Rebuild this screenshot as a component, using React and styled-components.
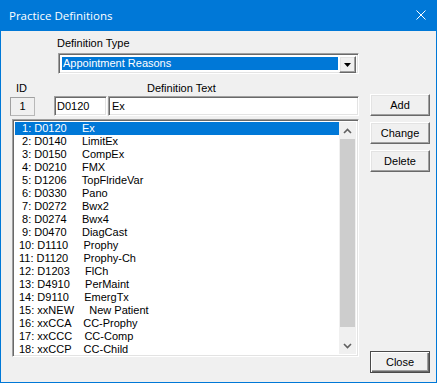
import React from "react";
import styled, { createGlobalStyle, css } from "styled-components";

const GlobalStyle = createGlobalStyle`
  html, body { margin: 0; padding: 0; background: #ffffff; }
  body { font-family: "Liberation Sans", Arial, sans-serif; font-size: 11px; color: #000; }
  * { box-sizing: border-box; }
`;

const sunken = css`
  border-style: solid;
  border-width: 1px;
  border-color: #a0a0a0 #ffffff #ffffff #a0a0a0;
  box-shadow: inset 1px 1px 0 #696969, inset -1px -1px 0 #e3e3e3;
`;

const raised = css`
  border-style: solid;
  border-width: 1px;
  border-color: #ffffff #696969 #696969 #ffffff;
  box-shadow: inset -1px -1px 0 #a0a0a0, inset 1px 1px 0 #e3e3e3;
  background: #f0f0f0;
`;

const Window = styled.div`
  width: 437px;
  height: 383px;
  border: 1px solid #0078d7;
  border-top: none;
  background: #f0f0f0;
  display: flex;
  flex-direction: column;
`;

const TitleBar = styled.div`
  height: 31px;
  flex: none;
  background: #0078d7;
  color: #ffffff;
  display: flex;
  align-items: center;
  justify-content: space-between;
  padding: 0 10px 1px 8px;
  font-family: "Open Sans", "Noto Sans", sans-serif;
  font-size: 11.5px;
`;

const Body = styled.div`
  flex: 1;
  display: flex;
  padding: 0 0 9px 9px;
`;

const LeftColumn = styled.div`
  width: 350px;
  display: flex;
  flex-direction: column;
`;

const RightColumn = styled.div`
  width: 60px;
  margin-left: 10px;
  padding-top: 63px;
  display: flex;
  flex-direction: column;
  gap: 6px;
`;

const Label = styled.div`
  line-height: 13px;
  height: 13px;
  margin-left: ${(p) => p.$indent || 0}px;
  margin-top: ${(p) => p.$top || 0}px;
  white-space: nowrap;
`;

const LabelsRow = styled.div`
  display: flex;
  margin-top: 8px;
`;

const Combo = styled.div`
  ${sunken};
  margin-top: 3px;
  margin-left: 48px;
  width: 301px;
  height: 21px;
  background: #ffffff;
  display: flex;
  padding: 2px;
`;

const ComboValue = styled.div`
  flex: 1;
  margin: 1px 1px 1px 1px;
  background: #0078d7;
  color: #ffffff;
  line-height: 13px;
  padding: 0 0 0 1px;
`;

const ComboButton = styled.div`
  ${raised};
  width: 17px;
  height: 17px;
  display: flex;
  align-items: center;
  justify-content: center;
`;

const FieldsRow = styled.div`
  display: flex;
  align-items: flex-start;
  margin-top: 1px;
`;

const IdBox = styled.div`
  width: 25px;
  height: 19px;
  margin-top: 1px;
  border: 1px solid #a0a0a0;
  border-right-color: #b8b8b8;
  border-bottom-color: #b8b8b8;
  display: flex;
  align-items: center;
  justify-content: center;
  padding-bottom: 1px;
`;

const Field = styled.div`
  ${sunken};
  background: #ffffff;
  width: ${(p) => p.$width}px;
  margin-left: ${(p) => p.$gap}px;
  height: 20px;
  display: flex;
  align-items: center;
  padding: 0 0 1px ${(p) => p.$pad}px;
  white-space: pre;
`;

const ListBox = styled.div`
  ${sunken};
  background: #ffffff;
  margin-top: 3px;
  margin-left: 2px;
  width: 347px;
  height: 238px;
  padding: 2px;
  display: flex;
`;

const Rows = styled.div`
  flex: 1;
  display: flex;
  flex-direction: column;
`;

const Row = styled.div`
  height: 13px;
  line-height: 13px;
  padding-left: 4px;
  white-space: pre;
  background: ${(p) => (p.$selected ? "#0078d7" : "transparent")};
  color: ${(p) => (p.$selected ? "#ffffff" : "#000000")};
`;

const ScrollBar = styled.div`
  width: 17px;
  display: flex;
  flex-direction: column;
  background: #f0f0f0;
`;

const ScrollArrow = styled.div`
  height: 17px;
  flex: none;
  display: flex;
  align-items: center;
  justify-content: center;
`;

const Track = styled.div`
  flex: 1;
  display: flex;
  flex-direction: column;
  padding: 0 0 10px 0;
`;

const Thumb = styled.div`
  flex: 1;
  margin: 0 1px;
  background: #cdcdcd;
`;

const Button = styled.div`
  ${raised};
  height: 22px;
  display: flex;
  align-items: center;
  justify-content: center;
  padding-bottom: 1px;
  ${(p) =>
    p.$default &&
    css`
      border: 1px solid #4a4a4a;
      box-shadow: inset 1px 1px 0 #ffffff, inset -1px -1px 0 #696969,
        inset -2px -2px 0 #a0a0a0;
      margin-top: auto;
    `}
`;

const entries = [
  ["D0120", "Ex"],
  ["D0140", "LimitEx"],
  ["D0150", "CompEx"],
  ["D0210", "FMX"],
  ["D1206", "TopFlrideVar"],
  ["D0330", "Pano"],
  ["D0272", "Bwx2"],
  ["D0274", "Bwx4"],
  ["D0470", "DiagCast"],
  ["D1110", "Prophy"],
  ["D1120", "Prophy-Ch"],
  ["D1203", "FlCh"],
  ["D4910", "PerMaint"],
  ["D9110", "EmergTx"],
  ["xxNEW", "New Patient"],
  ["xxCCA", "CC-Prophy", 4],
  ["xxCCC", "CC-Comp", 4],
  ["xxCCP", "CC-Child", 4],
];

const CloseIcon = () => (
  <svg width="10" height="10" viewBox="0 0 10 10">
    <path d="M0.5 0.5 L9.5 9.5 M9.5 0.5 L0.5 9.5" stroke="#fff" strokeWidth="1" />
  </svg>
);

const DownTriangle = () => (
  <svg width="7" height="4" viewBox="0 0 7 4">
    <path d="M0 0 H7 L3.5 4 Z" fill="#000" />
  </svg>
);

const Chevron = ({ up }) => (
  <svg width="9" height="6" viewBox="0 0 9 6">
    <path
      d={up ? "M1 5 L4.5 1.5 L8 5" : "M1 1 L4.5 4.5 L8 1"}
      stroke="#606060"
      strokeWidth="1.6"
      fill="none"
    />
  </svg>
);

export default function App() {
  return (
    <>
      <GlobalStyle />
      <Window>
        <TitleBar>
          <span>Practice Definitions</span>
          <CloseIcon />
        </TitleBar>
        <Body>
          <LeftColumn>
            <Label $indent={47} $top={6}>Definition Type</Label>
            <Combo>
              <ComboValue>Appointment Reasons</ComboValue>
              <ComboButton>
                <DownTriangle />
              </ComboButton>
            </Combo>
            <LabelsRow>
              <Label $indent={6}>ID</Label>
              <Label $indent={120}>Definition Text</Label>
            </LabelsRow>
            <FieldsRow>
              <IdBox>1</IdBox>
              <Field $width={53} $gap={19} $pad={2}>D0120</Field>
              <Field $width={251} $gap={1} $pad={3}>Ex</Field>
            </FieldsRow>
            <ListBox>
              <Rows>
                {entries.map(([code, desc, sp], i) => {
                  const n = i + 1;
                  const text = `${n < 10 ? " " : ""}${n}: ${code}${" ".repeat(sp || 5)}${desc}`;
                  return (
                    <Row key={n} $selected={i === 0}>
                      {text}
                    </Row>
                  );
                })}
              </Rows>
              <ScrollBar>
                <ScrollArrow>
                  <Chevron up />
                </ScrollArrow>
                <Track>
                  <Thumb />
                </Track>
                <ScrollArrow>
                  <Chevron />
                </ScrollArrow>
              </ScrollBar>
            </ListBox>
          </LeftColumn>
          <RightColumn>
            <Button>Add</Button>
            <Button>Change</Button>
            <Button>Delete</Button>
            <Button $default>Close</Button>
          </RightColumn>
        </Body>
      </Window>
    </>
  );
}
